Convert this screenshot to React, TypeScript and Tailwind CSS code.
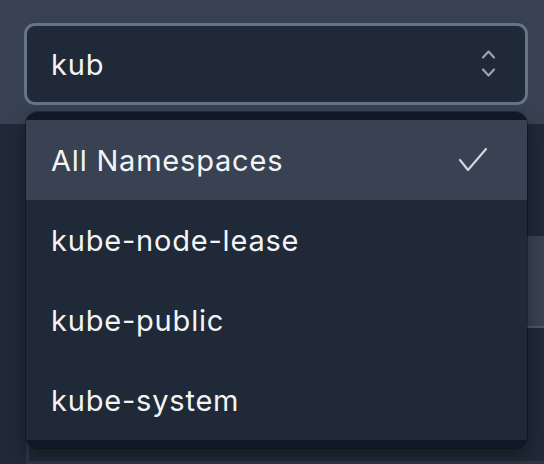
import React from "react";

const items = ["All Namespaces", "kube-node-lease", "kube-public", "kube-system"];

export default function App() {
  return (
    <div className="relative w-[544px] h-[464px] overflow-hidden bg-[#1f2937] font-['Inter','Noto_Sans',sans-serif]">
      {/* Top bar with select trigger */}
      <div className="h-[124px] bg-[#374151] pt-[23px] pl-[24px]">
        <div className="flex h-[82px] w-[504px] items-center justify-between rounded-[11px] border-[3px] border-[#687387] bg-[#1f2937] pl-[24px] pr-[28px]">
          <span className="text-[29px] tracking-[0.8px] leading-none text-[#f3f4f6]">kub</span>
          <svg width="16" height="32" viewBox="0 0 16 32" fill="none" stroke="#9ca3af" strokeWidth="2.2" strokeLinecap="round" strokeLinejoin="round">
            <polyline points="2,9.5 7.5,3.5 13,9.5" />
            <polyline points="2,21.5 7.5,27.5 13,21.5" />
          </svg>
        </div>
      </div>

      {/* Background table behind the menu */}
      <div className="ml-[26px] h-[340px] border-l-[3px] border-b-[3px] border-[#2c3646]">
        <div className="h-[112px]" />
        <div className="h-[92px] border-b-2 border-[#4b5563] bg-[#374151]" />
      </div>

      {/* Dropdown menu */}
      <div className="absolute left-[26px] top-[112px] w-[501px] overflow-hidden rounded-[12px] bg-[#111827] py-[8px] shadow-[0_8px_16px_rgba(0,0,0,0.35)] ring-1 ring-black/30">
        <div className="bg-[#1f2937]">
          {items.map((item, i) => (
            <div
              key={item}
              className={
                "flex h-[80px] items-center justify-between pl-[25px] pr-[38px] " +
                (i === 0 ? "bg-[#394253]" : "")
              }
            >
              <span className="text-[29px] tracking-[0.8px] leading-none text-[#f3f4f6]">{item}</span>
              {i === 0 && (
                <svg width="32" height="28" viewBox="0 0 32 28" fill="none" stroke="#d1d5db" strokeWidth="2.2" strokeLinecap="round" strokeLinejoin="round">
                  <polyline points="3,14 11,24 29,3" />
                </svg>
              )}
            </div>
          ))}
        </div>
      </div>
    </div>
  );
}
